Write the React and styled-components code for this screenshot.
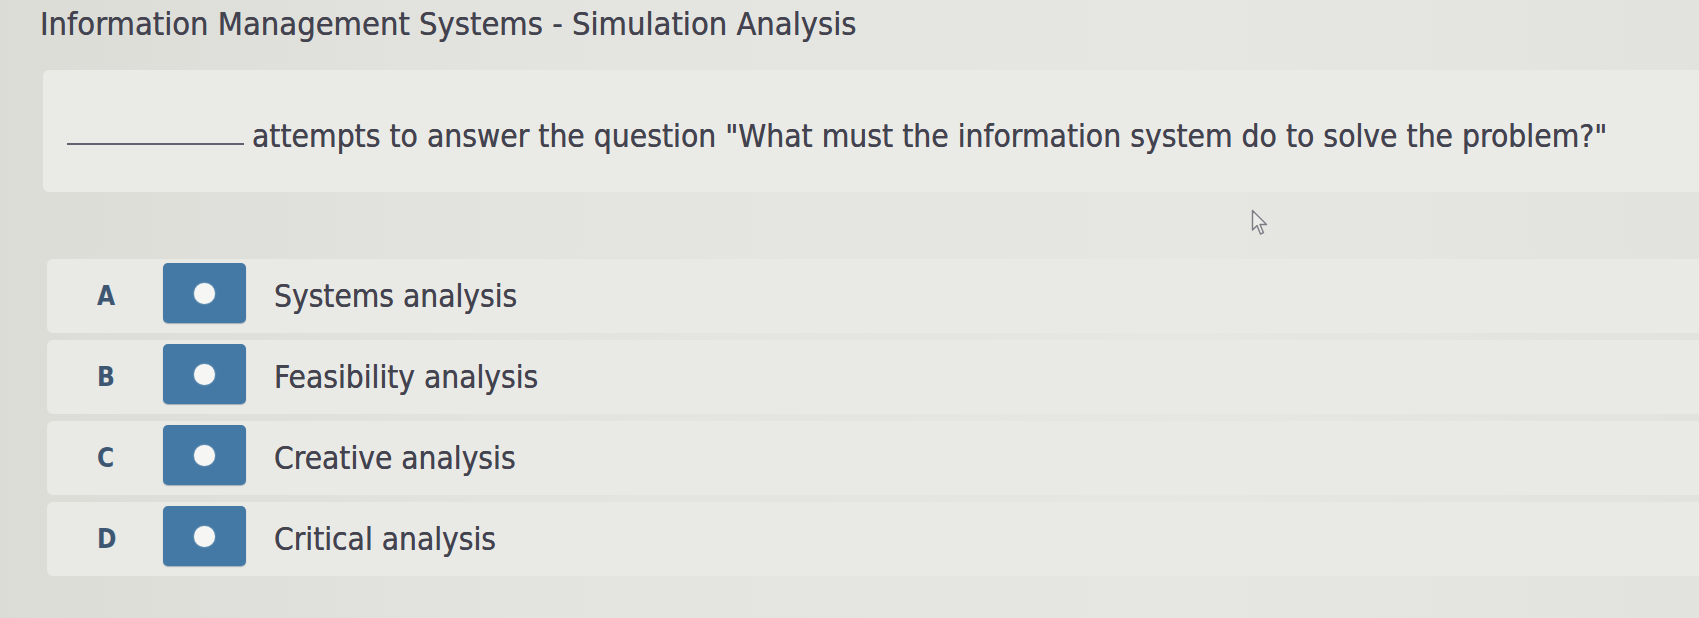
import React from 'react';
import styled, {createGlobalStyle} from "styled-components";

// page wide styles: no body margin, the photo's grey paper-like background
const GlobalStyle = createGlobalStyle`
  html, body {
    margin: 0;
    padding: 0;
  }
  body {
    width: 1699px;
    height: 618px;
    overflow: hidden;
    background: linear-gradient(90deg, #dcdcd7 0%, #e3e3df 30%, #e6e6e2 70%, #e2e2de 100%);
    font-family: "DejaVu Sans Condensed", "DejaVu Sans", sans-serif;
    color: #43434f;
  }
`

const Page = styled.div`
  position: relative;
  display: flex;
  flex-direction: column;
  padding-top: 4px;
`;

const Title = styled.h1`
  margin: 0 0 0 40px;
  font-size: 32.4px;
  font-weight: normal;
  line-height: 40px;
  color: #43434f;
  text-shadow: 0 0 0.4px #43434f;
`;

const QuestionBox = styled.div`
  margin: 26px 0 0 43px;
  height: 122px;
  display: flex;
  align-items: center;
  padding: 10px 0 0 24px;
  box-sizing: border-box;
  background: #eaeae6;
  border-radius: 6px 0 0 6px;
  font-size: 31.5px;
  text-shadow: 0 0 0.4px #43434f;
`;

// the blank to fill in
const Blank = styled.span`
  display: inline-block;
  width: 177px;
  height: 2px;
  margin: 0 8px 0 0;
  background: #62626f;
  vertical-align: baseline;
  position: relative;
  top: -2px;
`;

const Options = styled.div`
  margin: 67px 0 0 47px;
  display: flex;
  flex-direction: column;
  gap: 7px;
`;

const Row = styled.div`
  height: 74px;
  display: flex;
  align-items: center;
  background: #e9e9e5;
  border-radius: 6px 0 0 6px;
`;

const Letter = styled.span`
  width: 116px;
  padding-left: 50px;
  box-sizing: border-box;
  font-size: 26px;
  font-weight: bold;
  color: #3d5672;
`;

const Radio = styled.div`
  width: 83px;
  height: 60px;
  margin-top: -6px;
  border-radius: 5px;
  background: #4379a4;
  display: flex;
  align-items: center;
  justify-content: center;
  box-shadow: 0 1px 1px rgba(40, 70, 100, 0.35);

  &::after {
    content: "";
    width: 21px;
    height: 21px;
    border-radius: 50%;
    background: #f6f6f4;
    box-shadow: 0 0 2px rgba(255, 255, 255, 0.6);
  }
`;

const Answer = styled.span`
  margin-left: 28px;
  font-size: 31.4px;
  color: #43434f;
  text-shadow: 0 0 0.4px #43434f;
`;

// the mouse pointer lies over the page
const Cursor = styled.svg`
  position: absolute;
  left: 1251px;
  top: 209px;
`;

const answers = [
    {key: "A", text: "Systems analysis"},
    {key: "B", text: "Feasibility analysis"},
    {key: "C", text: "Creative analysis"},
    {key: "D", text: "Critical analysis"},
];

function App() {
    return (
        <>
            <GlobalStyle/>
            <Page>
                <Title>Information Management Systems - Simulation Analysis</Title>
                <QuestionBox>
                    <div>
                        <Blank/>attempts to answer the question "What must the information system do to solve the problem?"
                    </div>
                </QuestionBox>
                <Options>
                    {answers.map(a => (
                        <Row key={a.key}>
                            <Letter>{a.key}</Letter>
                            <Radio/>
                            <Answer>{a.text}</Answer>
                        </Row>
                    ))}
                </Options>
                <Cursor width="18" height="27" viewBox="0 0 18 27">
                    <path d="M1.5 1.5 L1.5 21 L6 16.5 L9.5 25 L12.5 23.7 L9 15.5 L15.5 15.5 Z"
                          fill="#ececea" stroke="#7c7c84" strokeWidth="1.4" strokeLinejoin="round"/>
                </Cursor>
            </Page>
        </>
    );
}

export default App;
